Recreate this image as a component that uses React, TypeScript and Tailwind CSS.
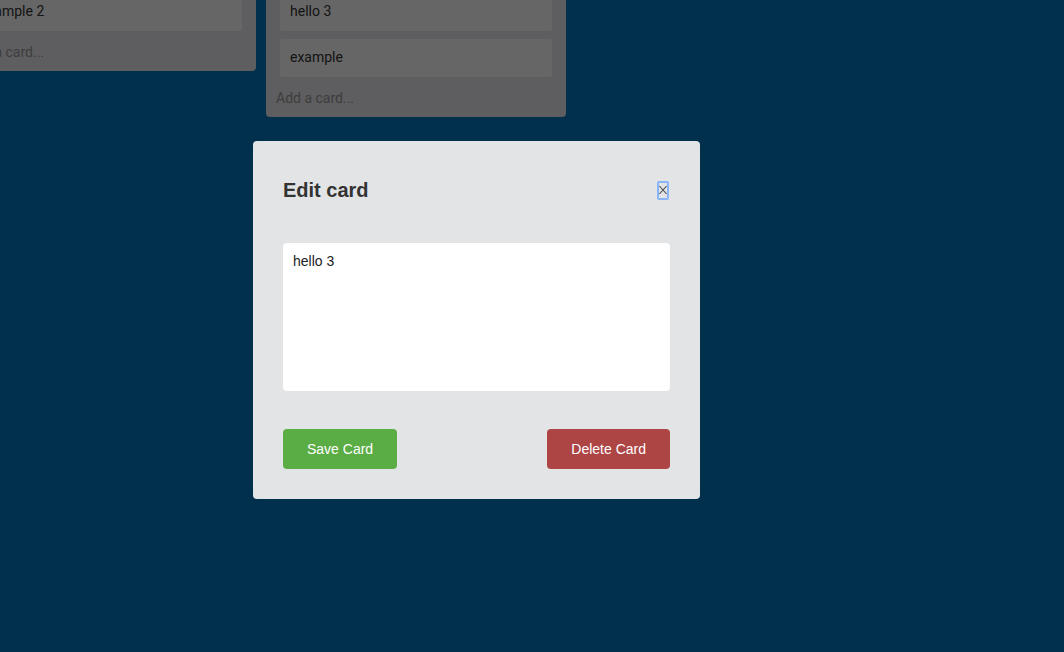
import React from "react";

const lists = [
  { id: "a", cards: ["example 2"] },
  { id: "b", cards: ["hello 3", "example"] },
];

function List({ cards }: { cards: string[] }) {
  return (
    <div className="w-[300px] shrink-0 rounded-[4px] bg-[#ebecf0] px-[10px] pt-[10px]">
      <div className="flex flex-col gap-[8px] px-[4px]">
        {cards.map((c) => (
          <div
            key={c}
            className="h-[38px] rounded-[3px] bg-white px-[10px] pb-[2px] text-[14px] leading-[36px] text-[#333]"
          >
            {c}
          </div>
        ))}
      </div>
      <div className="pt-[11px] pb-[9px] text-[14px] leading-[20px] text-[#999]">Add a card...</div>
    </div>
  );
}

export default function App() {
  return (
    <div className="relative h-[652px] w-full overflow-hidden bg-[#0079bf] font-['Roboto',sans-serif]">
      {/* Board */}
      <div className="-ml-[44px] -mt-[17px] flex items-start gap-[10px]">
        {lists.map((l) => (
          <List key={l.id} cards={l.cards} />
        ))}
      </div>

      {/* Overlay */}
      <div className="fixed inset-0 bg-black/60" />

      {/* Modal */}
      <div className="absolute left-[253px] top-[141px] flex w-[447px] flex-col rounded-[4px] bg-[#e2e4e6] p-[30px] font-['Liberation_Sans',Arial,sans-serif]">
        <div className="flex h-[38px] items-center justify-between">
          <h2 className="text-[20px] font-bold leading-[24px] text-[#333]">Edit card</h2>
          <button className="mr-[1px] flex h-[19px] w-[12px] items-center justify-center rounded-[2px] border-2 border-[#8ab4f8]">
            <svg width="9" height="10" viewBox="0 0 9 10" fill="none">
              <path d="M0.5 0.5L8.5 9.5M8.5 0.5L0.5 9.5" stroke="#444" strokeWidth="1.2" />
            </svg>
          </button>
        </div>

        <textarea
          defaultValue="hello 3"
          className="mt-[34px] h-[148px] w-full resize-none rounded-[4px] bg-white p-[10px] text-[14px] leading-[16px] text-[#222] outline-none"
        />

        <div className="mt-[38px] flex items-center justify-between">
          <button className="h-[40px] rounded-[4px] bg-[#5aac44] px-6 text-[14px] text-white">Save Card</button>
          <button className="h-[40px] rounded-[4px] bg-[#ad4545] px-6 text-[14px] text-white">Delete Card</button>
        </div>
      </div>
    </div>
  );
}
